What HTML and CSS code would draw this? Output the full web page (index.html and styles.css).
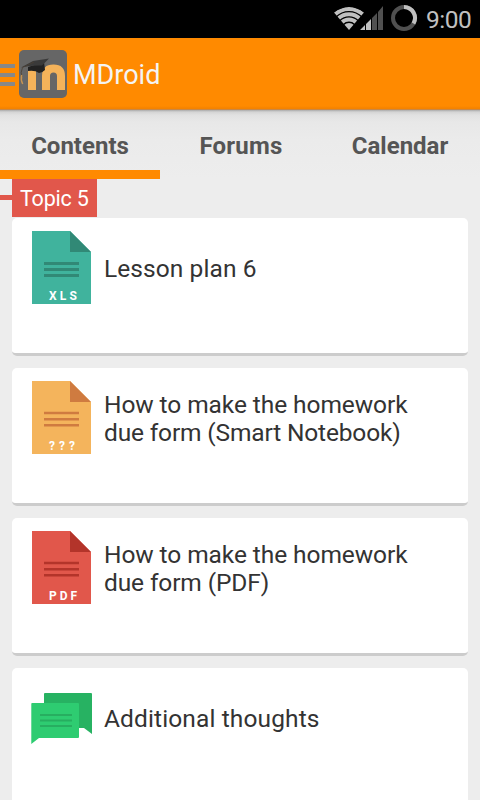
FILE: index.html
```html
<!DOCTYPE html>
<html lang="en">
<head>
<meta charset="utf-8">
<title>MDroid</title>
<link rel="stylesheet" href="styles.css">
</head>
<body>
<div class="screen">
  <div class="status">
    <svg class="signals" width="90" height="38" viewBox="330 0 90 38">
      <clipPath id="fan"><path d="M349 30L334 12.500Q349 1.500 364 12.500Z"/></clipPath>
      <g clip-path="url(#fan)" fill="none" stroke="#c0c0c0" stroke-width="4">
        <circle cx="349" cy="30" r="21"/><circle cx="349" cy="30" r="15.700"/><circle cx="349" cy="30" r="10.400"/><circle cx="349" cy="30" r="3.500" stroke-width="7"/>
      </g>
      <path fill="#c0c0c0" d="M360 30l5-5v5zM366 24l5-5v11h-5z"/>
      <path fill="#505050" d="M372 18l5-5v17h-5zM378 12l5-6v24h-5z"/>
      <circle cx="404" cy="18" r="11" fill="none" stroke="#505050" stroke-width="4"/>
      <path d="M404 7A11 11 0 0 1 413.500 23.500" fill="none" stroke="#c0c0c0" stroke-width="4"/>
    </svg>
    <span class="clock">9:00</span>
  </div>
  <header class="appbar">
    <div class="drawer"><i></i><i></i><i></i></div>
    <svg class="logo" width="48" height="48" viewBox="0 0 48 48">
      <rect width="48" height="48" rx="5" fill="#666"/>
      <path d="M13 40V19M27 40V26Q27 18.500 34.500 18.500T42 26V40" fill="none" stroke="#f5b35a" stroke-width="8"/>
      <path d="M9 17L25 12L26 20Q23 23 20 23Q16 20 9 21Z" fill="#222"/>
      <path d="M2 17.500L14 11L30 8.500L23 15.500Q12 15 2 17.500Z" fill="#3a3a3a"/>
      <path d="M15 12L3.500 17.500Q1 23 3 27" fill="none" stroke="#4b4034" stroke-width=".8"/>
      <path d="M2.700 25Q1.500 30 3.700 34" fill="none" stroke="#c59352" stroke-width="1.500"/>
    </svg>
    <h1>MDroid</h1>
  </header>
  <nav class="tabs"><a class="active"><span class="t1">Contents</span></a><a><span class="t2">Forums</span></a><a><span class="t3">Calendar</span></a></nav>
  <div class="topic"><i></i><span class="badge"><span class="label">Topic 5</span></span></div>
  <main>
    <article class="card">
      <svg class="file" width="60" height="74" viewBox="0 0 60 74"><path fill="#40b39d" d="M0 0H38L59 21V73H0z"/><path fill="#318976" d="M38 0L59 21H38z"/><path stroke="#318976" stroke-width="3" d="M12 32.500H47M12 38.500H47M12 44.500H47"/><text x="17" y="69" textLength="28">XLS</text></svg>
      <p><span class="l1">Lesson plan 6</span></p>
    </article>
    <article class="card">
      <svg class="file" width="60" height="74" viewBox="0 0 60 74"><path fill="#f4b45c" d="M0 0H38L59 21V73H0z"/><path fill="#cf7b40" d="M38 0L59 21H38z"/><path stroke="#cf7b40" stroke-width="2.500" d="M12 32H47M12 38.300H47M12 44.300H47"/><text x="17" y="69" textLength="26">???</text></svg>
      <p><span class="l2">How to make the homework</span><br><span class="l3">due form (Smart Notebook)</span></p>
    </article>
    <article class="card">
      <svg class="file" width="60" height="74" viewBox="0 0 60 74"><path fill="#e1574b" d="M0 0H38L59 21V73H0z"/><path fill="#b3342a" d="M38 0L59 21H38z"/><path stroke="#b3342a" stroke-width="2.500" d="M12 32H47M12 38.300H47M12 44.300H47"/><text x="17" y="69" textLength="28">PDF</text></svg>
      <p><span class="l2">How to make the homework</span><br><span class="l4">due form (PDF)</span></p>
    </article>
    <article class="card">
      <svg class="file" width="60" height="74" viewBox="0 0 60 74"><path fill="#27b262" d="M13 12H59Q60 12 60 13V53L52 47H12V13Q12 12 13 12z"/><path fill="#2ecc71" d="M0 22H46Q47 22 47 23V56Q47 57 46 57H7L-.700 63V23Q-.700 22 0 22z"/><path stroke="#27ae60" stroke-width="2" d="M8 34H40M8 39.500H40M8 45H40"/></svg>
      <p><span class="l5">Additional thoughts</span></p>
    </article>
  </main>
</div>
</body>
</html>
```
FILE: styles.css
```css
* { box-sizing: border-box; }
body { margin: 0; font-family: Roboto, "Liberation Sans", sans-serif; color: #333; }
.screen { width: 480px; height: 800px; overflow: hidden; background: #ededed; display: flex; flex-direction: column; }
.status { height: 38px; flex: none; background: #000; display: flex; align-items: center; justify-content: flex-end; padding-right: 9px; }
.signals { margin-right: 5px; }
.clock { color: #c0c0c0; font-size: 24.5px; letter-spacing: -0.5px; line-height: 38px; width: 46px; padding: 2px 0 0 1px; white-space: nowrap; }
.appbar { height: 72px; flex: none; background: linear-gradient(#ff8a00 0, #ff8a00 68px, #f58300 70px); display: flex; align-items: center; border-bottom: 1px solid #c88746; }
.drawer { width: 15px; margin-right: 4px; padding-top: 2px; display: grid; gap: 5px; }
.drawer i { height: 4px; background: #888; }
.logo { display: block; }
h1 { margin: 0 0 0 6px; padding-top: 2px; font-size: 27px; font-weight: 400; color: #f4f4f4; line-height: 32px; }
.tabs { height: 69px; flex: none; display: grid; grid-template-columns: repeat(3, 1fr); background: linear-gradient(#aaa 0, #d4d4d4 2px, #e1e1e1 5px, #e8e8e8 12px, #ebebeb 30px, #ededed); }
.tabs a { display: flex; align-items: center; justify-content: center; padding-top: 11px; font-size: 24px; font-weight: 700; color: #555; border-bottom: 9px solid transparent; }
.tabs .active { border-color: #ff8a00; }
.t2 { padding-left: 2px; letter-spacing: 0.2px; }
.topic { display: flex; align-items: center; height: 38px; flex: none; }
.topic i { width: 12px; height: 5px; margin-top: -1px; background: #e1574b; }
.badge { background: #e1574b; color: #fff; width: 85px; height: 38px; padding: 1px 0 0 8px; font-size: 21.5px; letter-spacing: -0.2px; line-height: 38px; white-space: nowrap; }
main { padding: 1px 12px 0; display: grid; gap: 12px; flex: none; }
.card { height: 138px; background: #fff; border-radius: 5px; border-bottom: 3px solid #ccc; display: flex; padding: 13px 0 0 20px; }
.file { flex: none; overflow: visible; }
.file text { font: 700 12px Roboto, sans-serif; fill: #fff; }
.card p { margin: -12px 0 0 12px; height: 100px; display: grid; align-content: center; font-size: 24.5px; line-height: 28px; white-space: nowrap; }
.card p br { display: none; }
.l1 { letter-spacing: 0.08px; }
.l2 { letter-spacing: -0.08px; }
.l3 { letter-spacing: -0.16px; }
.l4 { letter-spacing: -0.12px; }
.l5 { letter-spacing: 0.12px; }
```
